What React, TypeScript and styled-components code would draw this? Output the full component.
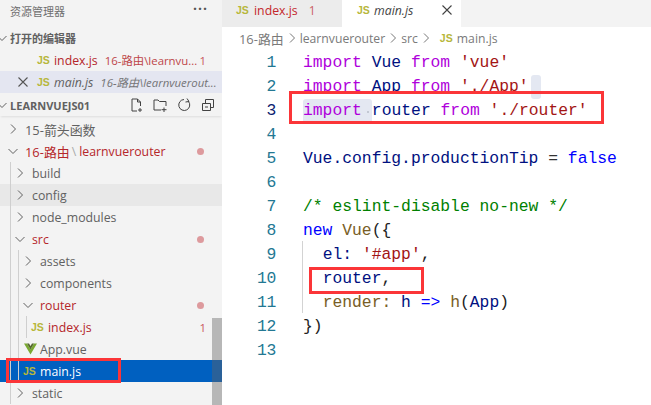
import React from 'react';
import styled, { createGlobalStyle } from 'styled-components';

const Global = createGlobalStyle`
  html, body { margin: 0; padding: 0; background: #fff; }
  #root { width: 651px; height: 405px; overflow: hidden; }
`;
const sans = `"Open Sans", "Noto Sans CJK SC", sans-serif`;

const Page = styled.div`
  position: relative; width: 651px; height: 405px; display: flex; overflow: hidden;
  font-family: ${sans}; background: #fff;
`;
const Sidebar = styled.aside`
  position: relative; width: 222px; flex: none; background: #f3f3f3; display: flex; flex-direction: column; overflow: hidden;
`;
const Title = styled.div`
  height: 22px; padding: 0 14px 0 10px; display: flex; align-items: center; justify-content: space-between;
  font-size: 11px; color: #6f6f6f;
`;
const Dots = styled.span`
  font-size: 14px; letter-spacing: 1px; color: #555; font-weight: 700; margin-top: -5px;
`;
const Section = styled.div<{ $shadow?: boolean }>`
  height: 22px; margin-top: ${p => p.$shadow ? 1 : 5}px; padding-left: 10px; position: relative; display: flex; align-items: center;
  font-size: 11px; font-weight: 700; color: #616161;
  box-shadow: ${p => p.$shadow ? '0 2px 2px -1px rgba(0,0,0,.09)' : 'none'};
`;
const SectionChev = styled.span`
  position: absolute; left: -6px; top: 3px; height: 16px;
`;
const Rows = styled.div<{ $mt?: number }>`
  display: flex; flex-direction: column; margin-top: ${p => p.$mt ?? 0}px;
`;
const Row = styled.div<{ $indent: number; $bg?: string; $color?: string; $right?: number }>`
  position: relative; height: 22px; display: flex; align-items: center; padding-left: ${p => p.$indent}px;
  padding-right: ${p => p.$right ?? 16}px; background: ${p => p.$bg ?? 'transparent'}; color: ${p => p.$color ?? '#616161'};
  font-size: 12.3px; white-space: nowrap;
`;
const Cjk = styled.span`
  font-size: 12.9px;
`;
const Guide = styled.span<{ $x: number }>`
  position: absolute; left: ${p => p.$x}px; top: 0; bottom: 0; width: 1px; background: #cfcfcf;
`;
const Slot = styled.span<{ $mr?: number }>`
  width: 16px; height: 16px; flex: none; display: flex; align-items: center; justify-content: center; margin-right: ${p => p.$mr ?? 4}px;
`;
const Js = styled.span<{ $mr?: number; $ml?: number }>`
  font-family: "Liberation Sans", sans-serif; font-weight: 700; font-size: 10.5px; color: #b7b73b; flex: none; width: 13px;
  margin-right: ${p => p.$mr ?? 0}px; margin-left: ${p => p.$ml ?? 0}px;
`;
const Desc = styled.span<{ $italic?: boolean; $ml: number }>`
  font-size: 11.4px; opacity: .85; margin-left: ${p => p.$ml}px; font-style: ${p => p.$italic ? 'italic' : 'normal'};
`;
const Name = styled.span<{ $italic?: boolean; $ml?: number }>`
  font-style: ${p => p.$italic ? 'italic' : 'normal'}; margin-left: ${p => p.$ml ?? 0}px;
`;
const Badge = styled.span`
  margin-left: auto; font-size: 11.5px; color: #c9585c;
`;
const Dot = styled.span`
  margin-left: auto; width: 7px; height: 7px; border-radius: 50%; background: #dd9a9d; margin-right: 2px;
`;
const Slash = styled.span`
  color: #aaa; margin: 0 3px 0 2px;
`;
const Actions = styled.span`
  margin-left: auto; margin-right: 6px; display: flex; gap: 8px; align-items: center;
`;
const ScrollThumb = styled.div`
  position: absolute; right: 0; top: 318px; bottom: 0; width: 10px; background: rgba(100,100,100,.42);
`;
const Main = styled.main`
  flex: 1; min-width: 0; display: flex; flex-direction: column;
`;
const Tabs = styled.div`
  height: 27px; flex: none; background: #f3f3f3; display: flex;
`;
const Tab = styled.div<{ $active?: boolean; $w: number }>`
  width: ${p => p.$w}px; background: ${p => p.$active ? '#fff' : '#ececec'}; display: flex; align-items: center;
  padding-left: ${p => p.$active ? 15 : 14}px; padding-bottom: 7px; box-sizing: border-box; font-size: 12.3px;
  color: ${p => p.$active ? '#444' : '#c4272b'};
`;
const TabCount = styled.span`
  margin-left: 11px; font-size: 12px; color: #cb6064;
`;
const CloseIcon = styled.span`
  margin-left: 28px; display: flex; align-items: center;
`;
const Crumbs = styled.div`
  height: 22px; padding-left: 17px; display: flex; align-items: center; font-size: 12.2px; color: #7a7a7a;
`;
const Code = styled.div`
  padding-top: 2px; font-family: "Liberation Mono", monospace; font-size: 16.35px; line-height: 24px; position: relative;
`;
const CodeLine = styled.div`
  height: 24px; display: flex; white-space: pre; position: relative;
`;
const LineNo = styled.span<{ $cur?: boolean }>`
  width: 54px; text-align: right; flex: none; margin-right: 27px; letter-spacing: -.3px;
  color: ${p => p.$cur ? '#0b216f' : '#237893'};
`;
const Tok = styled.span<{ $c: string }>`color: ${p => p.$c};`;
const Highlight = styled.span`
  position: relative; display: inline-block; height: 24px; background: #e4e8f2; border-radius: 3px; color: #af00db; padding-right: 10px;
  &::after { content: ''; position: absolute; right: 3px; top: 12px; width: 2px; height: 2px; border-radius: 50%; background: #b9bec9; }
`;
const BracketMark = styled.span`
  display: inline-block; width: 10px; height: 24px; margin-left: 2px; vertical-align: top; background: #e4e8f2; border-radius: 3px;
`;
const CodeGuide = styled.span`
  position: absolute; left: 80px; top: 192px; width: 1px; height: 72px; background: #d3d3d3;
`;
const Mark = styled.div<{ $x: number; $y: number; $w: number; $h: number }>`
  position: absolute; left: ${p => p.$x}px; top: ${p => p.$y}px; width: ${p => p.$w}px; height: ${p => p.$h}px;
  border: 3px solid #fb3538; box-sizing: border-box; pointer-events: none;
`;

const Chev = ({ open, c = '#616161' }: { open?: boolean; c?: string }) => (
  <svg width="16" height="16" viewBox="0 0 16 16" fill="none" stroke={c} strokeWidth="1">
    {open ? <path d="M3.5 6 L8 10.5 L12.5 6" /> : <path d="M6 3.5 L10.5 8 L6 12.5" />}
  </svg>
);
const X = ({ c = '#424242' }: { c?: string }) => (
  <svg width="12" height="12" viewBox="0 0 12 12" stroke={c} strokeWidth="1.1" fill="none"><path d="M1.5 1.5 L10.5 10.5 M10.5 1.5 L1.5 10.5" /></svg>
);
const Ico = ({ children }: { children: React.ReactNode }) => (
  <svg width="16" height="16" viewBox="0 0 16 16" fill="none" stroke="#424242" strokeWidth="1">{children}</svg>
);
const VueIcon = () => (
  <svg width="13" height="12" viewBox="0 0 13 12"><path d="M0 0.5 H3 L6.5 6.5 L10 0.5 H13 L6.5 11.5 Z" fill="#7aa832" /><path d="M3 0.5 H5 L6.5 3 L8 0.5 H10 L6.5 6.5 Z" fill="#55682e" /></svg>
);

const red = '#b5262a';
const kw = '#af00db', str = '#a31515', cls = '#001080', blue = '#0000ff', fn = '#795e26', green = '#008000', ink = '#001080';

const lines: React.ReactNode[] = [
  <><Tok $c={kw}>import</Tok> <Tok $c={cls}>Vue</Tok> <Tok $c={kw}>from</Tok> <Tok $c={str}>'vue'</Tok></>,
  <><Tok $c={kw}>import</Tok> <Tok $c={cls}>App</Tok> <Tok $c={kw}>from</Tok> <Tok $c={str}>'./App'</Tok><BracketMark /></>,
  <><Highlight>import</Highlight><Tok $c={cls}>router</Tok> <Tok $c={kw}>from</Tok> <Tok $c={str}>'./router'</Tok></>,
  <></>,
  <><Tok $c={cls}>Vue.config.productionTip</Tok> <Tok $c="#333">=</Tok> <Tok $c={blue}>false</Tok></>,
  <></>,
  <Tok $c={green}>/* eslint-disable no-new */</Tok>,
  <><Tok $c={blue}>new</Tok> <Tok $c={fn}>Vue</Tok><Tok $c="#222">({'{'}</Tok></>,
  <>  <Tok $c={ink}>el:</Tok> <Tok $c={str}>'#app'</Tok><Tok $c="#222">,</Tok></>,
  <>  <Tok $c={ink}>router</Tok><Tok $c="#222">,</Tok></>,
  <>  <Tok $c={fn}>render:</Tok> <Tok $c={cls}>h</Tok> <Tok $c={blue}>=&gt;</Tok> <Tok $c={fn}>h</Tok><Tok $c="#222">(</Tok><Tok $c={cls}>App</Tok><Tok $c="#222">)</Tok></>,
  <Tok $c="#222">{'})'}</Tok>,
  <></>,
];

export default function App() {
  return (
    <Page>
      <Global />
      <Sidebar>
        <Title>资源管理器<Dots>···</Dots></Title>
        <Section><SectionChev><Chev open /></SectionChev>打开的编辑器</Section>
        <Rows>
          <Row $indent={37} $color={red}>
            <Js $mr={4}>JS</Js><Name>index.js</Name><Desc $ml={7}>16-路由\learnvu...</Desc><Badge>1</Badge>
          </Row>
          <Row $indent={15} $bg="#e4e6f1" $right={2}>
            <Slot $mr={6}><X c="#555" /></Slot>
            <Js $mr={4}>JS</Js><Name $italic>main.js</Name><Desc $italic $ml={7}>16-路由\learnvuerout...</Desc>
          </Row>
          <Section $shadow>
            <SectionChev><Chev open /></SectionChev>LEARNVUEJS01
            <Actions>
              <Ico><path d="M4 14 V2 H9.5 L12.5 5 V9 M9.5 2 V5 H12.5 M4 14 H9 M12 11 V15 M10 13 H14" /></Ico>
              <Ico><path d="M2 3 H6 L7.5 4.5 H14 V9 M2 3 V13 H9 M12 10.5 V15 M9.5 12.7 H14.5" /></Ico>
              <Ico><path d="M12.5 4.5 A5.5 5.5 0 1 1 8 2.5 M11 1.5 L13 4.5 L9.5 5" /></Ico>
              <Ico><path d="M2.5 6.5 H10.5 V13.5 H2.5 Z M5.5 6.5 V2.5 H13.5 V10.5 H10.5 M5 10 H8" /></Ico>
            </Actions>
          </Section>
        </Rows>
        <Rows $mt={2}>
          <Row $indent={5}><Slot><Chev /></Slot><Cjk>15-箭头函数</Cjk></Row>
          <Row $indent={5} $color={red}><Slot><Chev open /></Slot><Cjk>16-路由</Cjk><Slash>\</Slash>learnvuerouter<Dot /></Row>
          <Row $indent={12}><Guide $x={10} /><Slot><Chev /></Slot>build</Row>
          <Row $indent={12} $bg="#e8e8e8"><Guide $x={10} /><Slot><Chev /></Slot>config</Row>
          <Row $indent={12}><Guide $x={10} /><Slot><Chev /></Slot>node_modules</Row>
          <Row $indent={12} $color={red}><Guide $x={10} /><Slot><Chev open /></Slot>src<Dot /></Row>
          <Row $indent={20}><Guide $x={10} /><Guide $x={18} /><Slot><Chev /></Slot>assets</Row>
          <Row $indent={20}><Guide $x={10} /><Guide $x={18} /><Slot><Chev /></Slot>components</Row>
          <Row $indent={20} $color={red}><Guide $x={10} /><Guide $x={18} /><Slot><Chev open /></Slot>router<Dot /></Row>
          <Row $indent={31} $color={red}><Guide $x={10} /><Guide $x={18} /><Guide $x={26} /><Js $mr={4}>JS</Js><Name>index.js</Name><Badge>1</Badge></Row>
          <Row $indent={24}><Guide $x={10} /><Guide $x={18} /><VueIcon /><Name $ml={3}>App.vue</Name></Row>
          <Row $indent={23} $bg="#0060c0" $color="#fff"><Guide $x={10} /><Guide $x={18} /><Js $mr={4}>JS</Js><Name>main.js</Name></Row>
          <Row $indent={12}><Guide $x={10} /><Slot><Chev /></Slot>static</Row>
        </Rows>
        <ScrollThumb />
      </Sidebar>
      <Main>
        <Tabs>
          <Tab $w={120}><Js $mr={5}>JS</Js><span>index.js</span><TabCount>1</TabCount></Tab>
          <Tab $w={119} $active><Js $mr={4}>JS</Js><Name $italic>main.js</Name><CloseIcon><X /></CloseIcon></Tab>
        </Tabs>
        <Crumbs>
          <Cjk>16-路由</Cjk><Chev c="#777" />learnvuerouter<Chev c="#777" />src<Chev c="#777" /><Js $ml={6} $mr={4}>JS</Js>main.js
        </Crumbs>
        <Code>
          <CodeGuide />
          {lines.map((l, i) => (
            <CodeLine key={i}>
              <LineNo $cur={i === 2}>{i + 1}</LineNo>
              <span>{l}</span>
            </CodeLine>
          ))}
        </Code>
      </Main>
      <Mark $x={289} $y={91} $w={315} $h={33} />
      <Mark $x={309} $y={267} $w={115} $h={27} />
      <Mark $x={6} $y={358} $w={115} $h={25} />
    </Page>
  );
}
